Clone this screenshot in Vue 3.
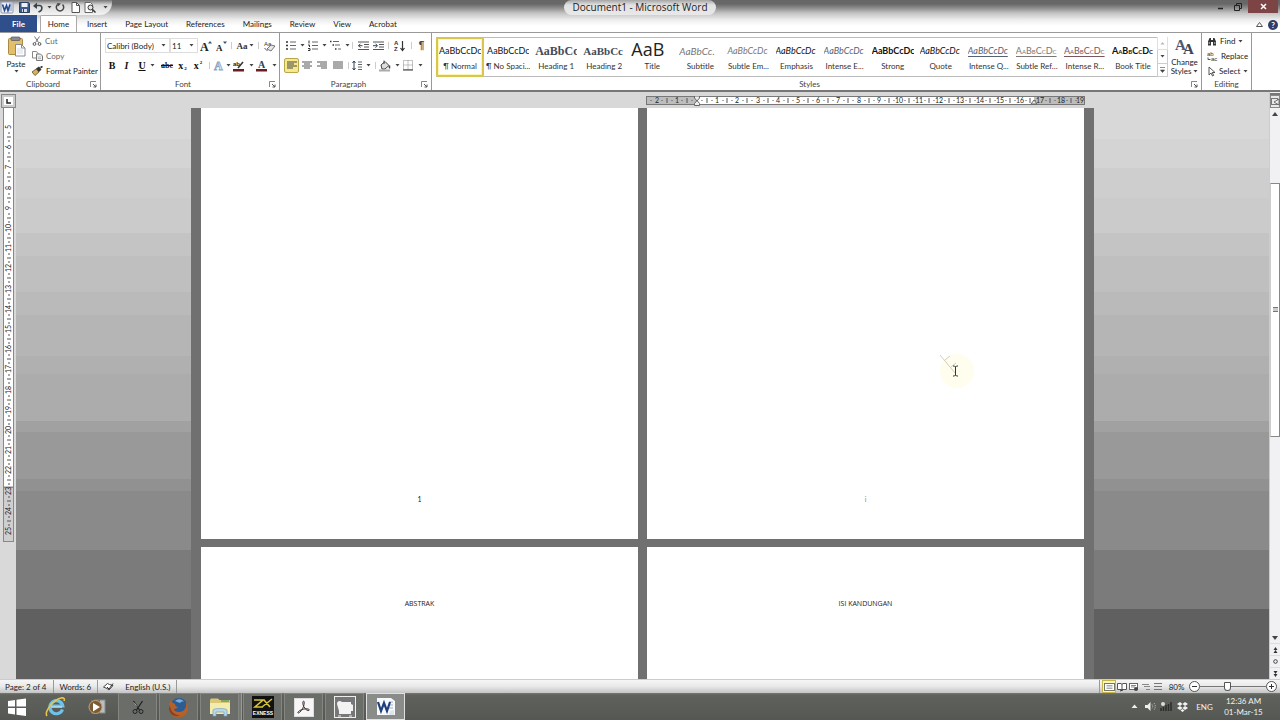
<script setup>
import { ref, h } from 'vue'

const serif = 'font-family="Liberation Serif, serif"'
const icons = {
  word: [14, 13, '<rect x="1" y="1" width="12" height="11" rx="1" fill="#e9eef8" stroke="#8a96b0"/><path d="M9 3h3M9 5h3M9 7h3M9 9h3" stroke="#8793b5"/><path d="M2.500 3.500l2 6 2-5 1.500 5 2-6" fill="none" stroke="#26488c" stroke-width="1.600"/>'],
  save: [11, 11, '<path d="M.5.5h9l1 1v9h-10z" fill="#3e5a88" stroke="#2b3f63"/><rect x="2.500" y="1" width="6" height="4" fill="#eef2f8"/><rect x="3" y="7" width="5" height="3" fill="#d5dce8"/><path d="M4.500 7v3" stroke="#2b3f63"/>'],
  undo: [11, 11, '<path d="M2 3.500h4.500c3 0 3 4 1 5.500l-2 1" fill="none" stroke="#39424f" stroke-width="1.600"/><path d="M0 4l4-3.500v6.500z" fill="#39424f"/>'],
  redo: [10, 11, '<path d="M7.500 2.500a3.700 3.700 0 1 1-5 0" fill="none" stroke="#444" stroke-width="1.500"/><path d="M2 1l4 .5-3 3z" fill="#444"/>'],
  doc: [9, 11, '<path d="M1 .5h4.500l3 3v7h-7.500z" fill="#fff" stroke="#555"/><path d="M5.500.5v3h3" fill="none" stroke="#555"/>'],
  preview: [12, 11, '<path d="M1 .5h5.500l2 2v8h-7.500z" fill="#fff" stroke="#666"/><circle cx="6.500" cy="5.500" r="2.500" fill="#dfe6ee" stroke="#333"/><path d="M8.500 7.500l3 3" stroke="#333" stroke-width="1.500"/>'],
  paste: [19, 21, '<rect x="1.500" y="2.500" width="14" height="16" rx="1" fill="#e3bf68" stroke="#a98948"/><rect x="4" y="1" width="9" height="3.500" rx="1" fill="#8b8b93" stroke="#55555e" stroke-width=".7"/><path d="M8.500 8.500h6l3.500 3.500v8h-9.500z" fill="#fff" stroke="#889"/><path d="M14.500 8.500v3.500h3.500" fill="none" stroke="#889"/><path d="M10 13h6M10 15h6M10 17h6" stroke="#c3cad6" stroke-width=".7"/>'],
  cut: [10, 10, '<path d="M2.500.5l4 6M7.500.5l-4 6" stroke="#777" fill="none"/><circle cx="2.500" cy="8" r="1.400" fill="none" stroke="#555"/><circle cx="7.500" cy="8" r="1.400" fill="none" stroke="#555"/>'],
  copy: [11, 10, '<path d="M.5.5h4l1.500 2v4.500h-5.500z" fill="#fff" stroke="#888"/><path d="M4.500 3h4l2 2v4.500h-6z" fill="#eee" stroke="#777"/><path d="M6 6h3M6 7.500h3" stroke="#999" stroke-width=".6"/>'],
  painter: [11, 10, '<path d="M0 6l4-3 3 3-4 3.500z" fill="#d9b25a" stroke="#5e4c28" stroke-width=".8"/><path d="M4 2.500l3-2 2.500 3-2.500 2.500z" fill="#333"/><path d="M8.500 1.500l2-1" stroke="#222" stroke-width="1.500"/>'],
  grow: [13, 14, `<text x="0" y="12" ${serif} font-size="12" font-weight="bold" fill="#222">A</text><path d="M8 4.500l2-2.500 2 2.500z" fill="#3a5075"/>`],
  shrink: [11, 12, `<text x="0" y="11" ${serif} font-size="9" font-weight="bold" fill="#222">A</text><path d="M7 1.500h4l-2 2.500z" fill="#3a5075"/>`],
  clear: [12, 12, '<text x="0" y="6" font-size="6" font-family="Liberation Sans" fill="#333">Aa</text><path d="M3 9l4-4 4 1-4 5z" fill="#e7e7ee" stroke="#555" stroke-width=".8"/><path d="M.5 8l3 3" stroke="#555"/>'],
  outlineA: [12, 14, `<text x="1" y="11" ${serif} font-size="12" font-weight="bold" fill="#fff" stroke="#8ca6c8" stroke-width=".9">A</text>`],
  marker: [12, 12, '<text x="0" y="6" font-size="6" font-weight="bold" font-family="Liberation Sans" fill="#222">ab</text><path d="M5 8l5-6" stroke="#333" stroke-width="1.500"/><rect x="0" y="9" width="11" height="2.500" fill="#6b1d26"/>'],
  colorA: [12, 12, `<text x="2" y="8" ${serif} font-size="10" font-weight="bold" fill="#2b3f63">A</text><rect x="0" y="9" width="11" height="2.500" fill="#6b1d26"/>`],
  bullets: [10, 11, '<path d="M0 2h2M0 5.500h2M0 9h2" stroke="#333" stroke-width="1.600"/><path d="M4 2h6M4 5.500h6M4 9h6" stroke="#666"/>'],
  numbers: [10, 11, '<path d="M1 .5v3M0 5h1.500v2M0 8.500h2v2h-2" stroke="#333" fill="none"/><path d="M4 2h6M4 5.500h6M4 9h6" stroke="#666"/>'],
  multi: [11, 11, '<path d="M0 1.500h1.500M2.500 5h1.500M5 9h1.500" stroke="#333" stroke-width="1.500"/><path d="M3 1.500h6M5 5h5M8 9h3" stroke="#666"/>'],
  outdent: [11, 10, '<path d="M0 1h11M6 3.500h5M6 6h5M0 8.500h11" stroke="#555"/><path d="M4.500 4.700h-4M2.500 2.700l-2 2 2 2" fill="none" stroke="#345"/>'],
  indent: [11, 10, '<path d="M0 1h11M6 3.500h5M6 6h5M0 8.500h11" stroke="#555"/><path d="M0 4.700h4M2.500 2.700l2 2-2 2" fill="none" stroke="#345"/>'],
  sort: [11, 12, '<text x="0" y="5" font-size="6" font-weight="bold" font-family="Liberation Sans" fill="#333">A</text><text x="0" y="11" font-size="6" font-weight="bold" font-family="Liberation Sans" fill="#333">Z</text><path d="M8.500 1v9M6.500 8l2 2.500 2-2.500" stroke="#333" fill="none" stroke-width="1.200"/>'],
  left: [10, 9, '<path d="M0 1h10M0 3h7M0 5h10M0 7h6" stroke="#444"/>'],
  center: [10, 9, '<path d="M0 1h10M2 3h6M0 5h10M2 7h6" stroke="#555"/>'],
  right: [10, 9, '<path d="M0 1h10M3 3h7M0 5h10M4 7h6" stroke="#555"/>'],
  justify: [10, 9, '<path d="M0 1h10M0 3h10M0 5h10M0 7h10" stroke="#555"/>'],
  spacing: [10, 11, '<path d="M2 1v9M.5 3l1.500-2 1.500 2M.5 8l1.500 2 1.500-2" stroke="#345" fill="none"/><path d="M6 2h4M6 4.500h4M6 7h4M6 9.500h4" stroke="#666"/>'],
  bucket: [12, 12, '<path d="M2 5l4-3.500 4 4-4 3.500-3 0z" fill="#ddd" stroke="#444"/><path d="M5 4v-3.500" stroke="#444"/><path d="M10.500 5.500v3" stroke="#444" stroke-width="1.500"/><path d="M0 10.500h11" stroke="#aaa" stroke-width="2"/>'],
  borders: [11, 11, '<path d="M.5 .5h9v9h-9zM5 .5v9M.5 5h9" stroke="#888" stroke-dasharray="1 1" fill="none"/><path d="M0 10h10" stroke="#333"/>'],
  change: [20, 20, '<text x="0" y="13" font-size="15" font-weight="bold" font-family="Liberation Serif" fill="#4c5a72">A</text><text x="8" y="17" font-size="15" font-weight="bold" font-family="Liberation Serif" fill="#3c4658">A</text>'],
  find: [10, 9, '<path d="M1 8.500v-4l1.500-3.500h1.500v7.500zM9 8.500v-4l-1.500-3.500h-1.500v7.500z" fill="#333"/><path d="M4 4h2" stroke="#333" stroke-width="2"/><path d="M2.200 5v2M7.800 5v2" stroke="#bbb"/>'],
  replace: [11, 10, '<text x="0" y="5" font-size="6" font-family="Liberation Sans" fill="#333">ab</text><text x="4" y="10" font-size="6" font-family="Liberation Sans" fill="#333">ac</text><path d="M1 6.500v2h2.500" fill="none" stroke="#555"/>'],
  select: [9, 11, '<path d="M2 1v8l2-2 1.500 3 1.200-.6-1.500-2.900h2.800z" fill="#fff" stroke="#444" stroke-width=".9"/>'],
  proof: [11, 10, '<path d="M.5 5l4-3.500 2 1 3.500 1-4 4.500-2-1.500z" fill="#fff" stroke="#444"/><path d="M4 5l2 2 4-5.500" fill="none" stroke="#333"/>'],
  v1: [11, 10, '<rect x=".5" y="1.500" width="10" height="7" fill="#fff" stroke="#776"/><path d="M2.500 3.500h6M2.500 5h6M2.500 6.500h6" stroke="#888" stroke-width=".7"/>'],
  v2: [10, 10, '<path d="M.5 1.500h3.500l1 .8 1-.8h3.500v6h-9zM5 2v6" fill="#fff" stroke="#555"/><path d="M3 9l3-1" stroke="#333"/>'],
  v3: [10, 10, '<rect x=".5" y="1.500" width="8" height="6" fill="#fff" stroke="#666"/><path d="M2 3.500h5M2 5h4" stroke="#888"/><circle cx="7" cy="7" r="2" fill="#444"/>'],
  v4: [9, 10, '<path d="M0 2.500h7M2 4.500h6M4 7.500h4" stroke="#888"/>'],
  v5: [8, 10, '<path d="M0 1.500h8M0 4.500h8M0 7.500h8" stroke="#777"/>'],
  start: [20, 20, '<path d="M1 4l7-1v6.500h-7zM9.500 2.800l9.500-1.300v8h-9.500zM1 11h7v6.500l-7-1zM9.500 11h9.500v8l-9.500-1.300z" fill="#fff"/>'],
  ie: [22, 22, '<path d="M17.500 13.500a6.500 6.500 0 1 1 .3-3.500h-11" fill="none" stroke="#6fc3ea" stroke-width="3.200"/><path d="M2 20c-3-4 6-16 14-18 3-.5 4 1 3 3" fill="none" stroke="#e6c649" stroke-width="1.600"/><path d="M6 11h11" stroke="#bfe6f7" stroke-width="1.200"/>'],
  wmp: [18, 18, '<rect x="7" y="2" width="10" height="13" fill="#b9bec4" stroke="#888"/><rect x="3" y="2" width="9" height="14" fill="#6a6e73"/><circle cx="7.500" cy="9" r="6.500" fill="#7a5b34" stroke="#c4a26b"/><path d="M5 5l7 4-7 4.500z" fill="#fff"/>'],
  snip: [12, 15, '<path d="M1.500 1l6 9M10.500 1l-6 9" stroke="#222" stroke-width="1.300"/><circle cx="3" cy="11.500" r="2" fill="none" stroke="#222"/><circle cx="9" cy="11.500" r="2" fill="none" stroke="#222"/><path d="M2 2.500l3 4" stroke="#ccc" stroke-width=".7"/>'],
  firefox: [21, 21, '<circle cx="11" cy="9.500" r="8.500" fill="#2c5c92"/><path d="M7 4c3-3 8-2 9 1-2-1-3 0-4 1z" fill="#79aede"/><path d="M2 3c0 3-1 4-1 8a9.500 9.500 0 0 0 19 0c0-3-1-5-2-6 1 6-2 10-7 10-3 0-5-1-5-3 2 0 3-1 4-2-2 0-3-2-3-3-2-1-4-2-5-4z" fill="#b5622a"/><path d="M2 8c0 7 6 11 11 10-5 3-12 0-12-7z" fill="#8d3e1c"/>'],
  explorer: [22, 20, '<path d="M1 3l1-1.500h7l1.500 1.500h10.500v14h-20z" fill="#d9c878"/><path d="M1 6h20v11h-20z" fill="#f2ecad"/><path d="M12 4h8" stroke="#7fa869" stroke-width="2"/><path d="M4 19v-6c0-2 14-2 14 0v6h-3v-4h-8v4z" fill="#b8d7ea" stroke="#7da3bb" stroke-width=".7"/>'],
  exness: [22, 22, '<rect width="22" height="22" fill="#111"/><path d="M2 4h9l-8 7h8M10 11l10-8M12 4l6 7" fill="none" stroke="#d8c33d" stroke-width="1.600"/><text x="11" y="19" font-size="5" text-anchor="middle" font-weight="bold" font-family="Liberation Sans" fill="#fff">EXNESS</text>'],
  acrobat: [20, 19, '<rect x=".5" y=".5" width="19" height="18" fill="#f7f5f5" stroke="#ddd"/><path d="M9 3.500c1.500-1.500 1.500 2 .5 5-1 3-3.500 6-5 6.500-1 .3-1-1 1-2.300 3-1.800 6-2.200 8.500-1.700 2 .5 1.500 1.800 0 1.500-2-.3-4.500-3.500-5-6-.3-1.500-.3-2.700 0-3z" fill="none" stroke="#3a3030" stroke-width="1"/>'],
  camtasia: [22, 22, '<rect x=".5" y=".5" width="21" height="21" fill="#77777a" stroke="#eee"/><path d="M3 8c0-3 3-4 5-2h9v2l2 1v6h-2v3h-12v-3z" fill="#f2f2f2"/><path d="M4 20h3M15 20h3" stroke="#eee"/>'],
  wordbig: [20, 20, '<path d="M1 1h14l4 3v14h-18z" fill="#f8f9fb"/><path d="M13 5h4M13 8h4M13 11h4" stroke="#9fb0c8"/><path d="M2 5l3 9 3-8 3 8 3-9" fill="none" stroke="#1d3f7c" stroke-width="2.200"/><path d="M14 14l4-1v5h-5z" fill="#dfe5ee"/>'],
  up: [7, 5, '<path d="M3.500 0.500l3 3.500h-6z" fill="#eee"/>'],
  sound: [11, 11, '<path d="M0 4h2.500l3-3v9l-3-3h-2.500z" fill="#eee"/><path d="M7 3.500q1.500 2 0 4M9 2q2.500 3.500 0 7" fill="none" stroke="#ccc" stroke-dasharray="1 1"/>'],
  net: [12, 11, '<path d="M1 10v-3M3.500 10v-4M6 10v-6M8.500 10v-7M11 10v-9" stroke="#2c2d2b" stroke-width="1.500"/><circle cx="3" cy="3" r="2" fill="#ddd"/>'],
  dropbox: [11, 10, '<path d="M3 0l2.500 2-2.500 2-3-2zM8 0l3 2-3 2-2.500-2zM3 4l2.500 2-2.500 2-3-2zM8 4l3 2-3 2-2.500-2zM5.500 7l2 1.500-2 1.500-2-1.500z" fill="#f2f2f2"/>'],
  launcher: [7, 7, '<path d="M.5 6v-5.500h5.500" fill="none" stroke="#888"/><path d="M3 3l3 3M6 3.500v2.500h-2.500" fill="none" stroke="#555"/>'],
  browse: [9, 9, '<rect x=".5" y="1.500" width="6" height="6" fill="none" stroke="#777"/><path d="M3 5l5-3v6z" fill="#eee" stroke="#555" stroke-width=".8"/>']
}

const Icon = (p) => {
  const [w, ht, body] = icons[p.name]
  return h('svg', { width: w, height: ht, viewBox: `0 0 ${w} ${ht}`, innerHTML: body, 'aria-hidden': 'true' })
}
Icon.props = ['name']
const Caret = () => h('svg', { width: 5, height: 3, viewBox: '0 0 5 3', 'aria-hidden': 'true' }, [h('path', { d: 'M.5 0h4l-2 2.500z', fill: '#444' })])

const tabs = ['Insert', 'Page Layout', 'References', 'Mailings', 'Review', 'View', 'Acrobat']
const paraRow1 = [['bullets', 1], ['numbers', 1], ['multi', 1], null, ['outdent'], ['indent'], null, ['sort'], null]
const paraRow2 = [['left'], ['center'], ['right'], ['justify'], null, ['spacing', 1], null, ['bucket', 1], ['borders', 1]]
const styles = [
  ['AaBbCcDc', '¶ Normal', 'plain'],
  ['AaBbCcDc', '¶ No Spaci...', 'plain'],
  ['AaBbCc', 'Heading 1', 'head h1'],
  ['AaBbCc', 'Heading 2', 'head h2'],
  ['AaB', 'Title', 'title'],
  ['AaBbCc.', 'Subtitle', 'ital soft wide'],
  ['AaBbCcDc', 'Subtle Em...', 'ital soft'],
  ['AaBbCcDc', 'Emphasis', 'ital'],
  ['AaBbCcDc', 'Intense E...', 'ital blue'],
  ['AaBbCcDc', 'Strong', 'bold'],
  ['AaBbCcDc', 'Quote', 'ital'],
  ['AaBbCcDc', 'Intense Q...', 'ital blue under'],
  ['AaBbCcDc', 'Subtle Ref...', 'caps soft under'],
  ['AaBbCcDc', 'Intense R...', 'caps red under'],
  ['AaBbCcDc', 'Book Title', 'caps bold']
]
const activeStyle = ref(0)

const hNums = Array.from({ length: 19 }, (_, i) => i + 1)
const hx = (n) => Math.round(51 + n * 20.2)
const vNums = Array.from({ length: 21 }, (_, i) => i + 5)
const vy = (n) => Math.round(19 + (n - 5) * 20.2)

const apps = ['snip', 'firefox', 'explorer', 'exness', 'acrobat', 'camtasia', 'wordbig']
const appNames = ['Snipping Tool', 'Firefox', 'File Explorer', 'Exness', 'Acrobat Reader', 'Recorder', 'Word']
const zoom = ref(41)
</script>

<template>
  <div class="window">
    <header class="top">
      <div class="titlebar">
        <div class="qat">
          <button aria-label="Word"><Icon name="word" /></button>
          <button aria-label="Save"><Icon name="save" /></button>
          <button aria-label="Undo"><Icon name="undo" /><Caret /></button>
          <button aria-label="Redo"><Icon name="redo" /></button>
          <button aria-label="New"><Icon name="doc" /></button>
          <button aria-label="Print preview"><Icon name="preview" /></button>
          <button aria-label="Customize"><Caret /></button>
        </div>
        <h1>Document1 - Microsoft Word</h1>
        <div class="winbtns">
          <button aria-label="Minimize"><svg width="7" height="7"><path d="M1 5.500h5" stroke="#222" stroke-width="1.500" /></svg></button>
          <button aria-label="Restore"><svg width="8" height="8"><path d="M.5 2.500h5v5h-5zM2.500 2v-1.500h5v5h-2" fill="none" stroke="#222" /></svg></button>
          <button class="close" aria-label="Close"><svg width="7" height="7"><path d="M1 1l5 5M6 1l-5 5" stroke="#fff" stroke-width="1.500" /></svg></button>
        </div>
      </div>
      <nav class="tabs">
        <button class="file">File</button>
        <button class="home">Home</button>
        <button v-for="t in tabs" :key="t">{{ t }}</button>
        <span class="grow"></span>
        <button class="mini" aria-label="Minimize ribbon"><svg width="7" height="6"><path d="M.5 5.500l3-4 3 4z" fill="#fff" stroke="#555" /></svg></button>
        <button class="help" aria-label="Help">?</button>
      </nav>
    </header>

    <section class="ribbon">
      <div class="group clipboard">
        <div class="body">
          <button class="big"><Icon name="paste" /><span>Paste</span><Caret /></button>
          <div class="list">
            <button class="dim"><Icon name="cut" />Cut</button>
            <button class="dim"><Icon name="copy" />Copy</button>
            <button><Icon name="painter" />Format Painter</button>
          </div>
        </div>
        <footer><span>Clipboard</span><button aria-label="Clipboard options"><Icon name="launcher" /></button></footer>
      </div>

      <div class="group font">
        <div class="body rows">
          <div class="row f1">
            <label class="combo"><select aria-label="Font"><option>Calibri (Body)</option></select><Caret /></label>
            <label class="combo"><select aria-label="Font size"><option>11</option></select><Caret /></label>
            <button aria-label="Grow font"><Icon name="grow" /></button>
            <button aria-label="Shrink font"><Icon name="shrink" /></button>
            <i class="sep"></i>
            <button class="aa">Aa<Caret /></button>
            <i class="sep"></i>
            <button aria-label="Clear formatting"><Icon name="clear" /></button>
          </div>
          <div class="row f2">
            <button class="glyph b">B</button>
            <button class="glyph i">I</button>
            <button class="glyph u spread"><u>U</u><Caret /></button>
            <button class="glyph s"><s>abc</s></button>
            <button class="glyph x">x<sub>2</sub></button>
            <button class="glyph x">x<sup>2</sup></button>
            <i class="sep"></i>
            <button aria-label="Text effects"><Icon name="outlineA" /><Caret /></button>
            <button class="spread" aria-label="Highlight"><Icon name="marker" /><Caret /></button>
            <button class="spread" aria-label="Font color"><Icon name="colorA" /><Caret /></button>
          </div>
        </div>
        <footer><span>Font</span><button aria-label="Font options"><Icon name="launcher" /></button></footer>
      </div>

      <div class="group para">
        <div class="body rows">
          <div class="row p1">
            <template v-for="(b, k) in paraRow1" :key="k">
              <i v-if="!b" class="sep"></i>
              <button v-else :class="{ spread: b[1] }" :aria-label="b[0]"><Icon :name="b[0]" /><Caret v-if="b[1]" /></button>
            </template>
            <button class="pilcrow">¶</button>
          </div>
          <div class="row p2">
            <template v-for="(b, k) in paraRow2" :key="k">
              <i v-if="!b" class="sep"></i>
              <button v-else :class="{ spread: b[1], on: b[0] === 'left' }" :aria-label="b[0]"><Icon :name="b[0]" /><Caret v-if="b[1]" /></button>
            </template>
          </div>
        </div>
        <footer><span>Paragraph</span><button aria-label="Paragraph options"><Icon name="launcher" /></button></footer>
      </div>

      <div class="group stylesgrp">
        <div class="body">
          <div class="gallery">
            <button v-for="(s, k) in styles" :key="k" :class="['tile', { sel: k === activeStyle }]" @click="activeStyle = k">
              <span :class="['sample', s[2]]">{{ s[0] }}</span>
              <span class="name">{{ s[1] }}</span>
            </button>
          </div>
          <div class="spin">
            <button class="off" aria-label="Previous styles"><svg width="5" height="3"><path d="M2.500 0l2 2.500h-4z" fill="#888" /></svg></button>
            <button aria-label="Next styles"><Caret /></button>
            <button aria-label="More styles"><svg width="5" height="6"><path d="M0 .5h5M.5 3h4l-2 2.500z" fill="#444" stroke="#444" stroke-width=".6" /></svg></button>
          </div>
          <button class="big change"><Icon name="change" /><span>Change</span><span class="line">Styles <Caret /></span></button>
        </div>
        <footer><span>Styles</span><button aria-label="Styles options"><Icon name="launcher" /></button></footer>
      </div>

      <div class="group editing">
        <div class="body">
          <div class="list">
            <button><Icon name="find" />Find<Caret /></button>
            <button><Icon name="replace" />Replace</button>
            <button><Icon name="select" />Select<Caret /></button>
          </div>
        </div>
        <footer><span>Editing</span></footer>
      </div>
      <div class="rest"></div>
    </section>

    <main class="work">
      <aside class="left">
        <button class="corner" aria-label="Tab stop"><svg width="5" height="5"><path d="M1 0v4h4" fill="none" stroke="#222" stroke-width="1.500" /></svg></button>
        <svg class="vruler" width="11" height="434">
          <rect x=".5" y="-1" width="10" height="380" fill="#fff" stroke="#888" />
          <rect x=".5" y="379.500" width="10" height="54" fill="#cfcfcf" stroke="#888" />
          <g v-for="n in vNums" :key="n">
            <text class="rnum" :transform="`translate(8 ${vy(n)}) rotate(-90)`">{{ n }}</text>
            <path v-if="n < 25" :d="`M4 ${vy(n) + 10}h4M5 ${vy(n) + 6}h2M5 ${vy(n) + 14}h2`" stroke="#555" />
          </g>
        </svg>
      </aside>
      <div class="canvas">
        <div class="sheets">
          <svg class="hruler" width="439" height="10">
            <rect x=".5" y=".5" width="438" height="8" fill="#bdbdbd" stroke="#777" />
            <rect x="51" y="1" width="337" height="7" fill="#fff" />
            <text class="rnum" x="11" y="7">2</text>
            <text class="rnum" x="31" y="7">1</text>
            <path d="M21 2v5M41 2v5M16 4v1M26 4v1M36 4v1M46 4v1M5 4v1M61 2v5M56 4v1M66 4v1" stroke="#555" />
            <g v-for="n in hNums" :key="n">
              <text class="rnum" :x="hx(n) - (n === 19 ? 1 : 0)" y="7">{{ n }}</text>
              <path v-if="n < 19" :d="`M${hx(n) + 10} 2v5M${hx(n) + 6} 4v1M${hx(n) + 15} 4v1`" stroke="#555" />
            </g>
            <path d="M48.500 0h5v2l-2.500 3-2.500-3zM48.500 9.500v-2l2.500-3 2.500 3v2zM385 8l3-4 3 4z" fill="#eee" stroke="#666" />
          </svg>
          <div class="desk">
            <article class="page"><p class="num">1</p></article>
            <article class="page">
              <p class="num faint">i</p>
              <div class="spot">
                <svg width="34" height="34">
                  <circle cx="17" cy="17" r="17" fill="#fffeee" />
                  <path d="M0 1l15 18M5 6l5-4M11 13l5-4" stroke="#c4c2ad" fill="none" stroke-width=".8" />
                  <path d="M13 12h1.500l1 1 1-1h1.500M15.500 13v8M13 22h1.500l1-1 1 1h1.500" fill="none" stroke="#333" />
                </svg>
              </div>
            </article>
            <article class="page"><h2>ABSTRAK</h2></article>
            <article class="page"><h2>ISI KANDUNGAN</h2></article>
          </div>
        </div>
      </div>
      <aside class="scroll">
        <span class="split"></span>
        <button class="toggle" aria-label="View ruler"><Icon name="browse" /></button>
        <button aria-label="Scroll up"><svg width="6" height="4"><path d="M3 0l3 4h-6z" fill="#444" /></svg></button>
        <div class="track"><div class="thumb"><i></i></div></div>
        <button aria-label="Scroll down"><svg width="6" height="4"><path d="M0 0h6l-3 4z" fill="#444" /></svg></button>
        <button class="nav" aria-label="Previous page"><svg width="5" height="6"><path d="M2.500 0l2 3h-4zM2.500 3l2 3h-4z" fill="#333" /></svg></button>
        <button class="nav" aria-label="Browse object"><svg width="5" height="5"><circle cx="2.500" cy="2.500" r="1.800" fill="none" stroke="#444" /></svg></button>
        <button class="nav" aria-label="Next page"><svg width="5" height="6"><path d="M.5 0h4l-2 3zM.5 3h4l-2 3z" fill="#333" /></svg></button>
      </aside>
    </main>

    <div class="status">
      <button>Page: 2 of 4</button>
      <button>Words: 6</button>
      <button class="proof" aria-label="Proofing"><Icon name="proof" /></button>
      <button class="lang">English (U.S.)</button>
      <span class="grow"></span>
      <div class="views">
        <button v-for="n in 5" :key="n" :class="{ on: n === 1 }" :aria-label="'View ' + n"><Icon :name="'v' + n" /></button>
      </div>
      <button class="pct">80%</button>
      <button class="round" aria-label="Zoom out"><svg width="11" height="11"><circle cx="5.500" cy="5.500" r="5" fill="#fff" stroke="#555" /><path d="M3 5.500h5" stroke="#333" /></svg></button>
      <input v-model="zoom" type="range" min="0" max="100" aria-label="Zoom" />
      <button class="round" aria-label="Zoom in"><svg width="11" height="11"><circle cx="5.500" cy="5.500" r="5" fill="#fff" stroke="#555" /><path d="M3 5.500h5M5.500 3v5" stroke="#333" /></svg></button>
    </div>

    <div class="taskbar">
      <button class="task bare first" aria-label="Start"><Icon name="start" /></button>
      <button class="task bare" aria-label="Internet Explorer"><Icon name="ie" /></button>
      <button class="task bare" aria-label="Media Player"><Icon name="wmp" /></button>
      <button v-for="(a, k) in apps" :key="a" :class="['task', { active: a === 'wordbig', stack: a === 'explorer' }]" :aria-label="appNames[k]"><Icon :name="a" /></button>
      <span class="grow"></span>
      <div class="tray">
        <button aria-label="Hidden icons"><Icon name="up" /></button>
        <button aria-label="Volume"><Icon name="sound" /></button>
        <button aria-label="Network"><Icon name="net" /></button>
        <button aria-label="Dropbox"><Icon name="dropbox" /></button>
        <button class="eng">ENG</button>
        <time><span>12:36 AM</span><span>01-Mar-15</span></time>
      </div>
    </div>
  </div>
</template>

<style>
html, body { background: #d8d8d8; }
</style>

<style scoped>
.window { height: 100vh; display: flex; flex-direction: column; overflow: hidden; font: 8px/10px Lato, "Open Sans", sans-serif; color: #222; background: #fff; }
.window *, .window { box-sizing: border-box; }
button { border: 0; padding: 0; margin: 0; background: none; color: inherit; font: inherit; display: flex; align-items: center; justify-content: center; white-space: nowrap; }
svg { display: block; flex: none; }
.grow { flex: 1; }

.top { height: 33px; flex: none; background: linear-gradient(#666 0, #686868 4px, #8c8c8c 8px, #c2c2c2 13px, #eee 20px, #fff 26px); border-bottom: 1px solid #999; display: flex; flex-direction: column; }
.titlebar { height: 16px; display: grid; grid-template-columns: 1fr auto 1fr; align-items: start; }
.qat { display: grid; grid-template-columns: 14px 20px 17px 18px 12px 17px 14px; height: 15px; width: 112px; background: linear-gradient(#777 0, #d8d8d8 5px, #f4f4f4); border-radius: 0 0 12px 0; }
.qat button:nth-child(3) { gap: 3px; }
h1 { margin: 0; padding: 0 8px; font: 10px/15px "Open Sans", sans-serif; color: #222; border-radius: 8px; background: linear-gradient(#a5a5a5, #e2e2e2 5px, #e8e8e8); }
.winbtns { display: flex; justify-content: flex-end; padding-right: 2px; }
.winbtns button { width: 17px; height: 13px; }
.winbtns .close { width: 30px; margin-left: 2px; background: #7c4444; }
.tabs { flex: 1; display: flex; align-items: stretch; }
.tabs button { padding: 0 9px; }
.tabs .file { width: 37px; padding: 0; background: #2f4f8c; color: #fff; font-weight: 700; }
.tabs .home { width: 37px; padding: 0; margin: 0 1px 0 3px; background: #fff; border: 1px solid #aaa; border-bottom: 0; border-radius: 2px 2px 0 0; height: 17px; }
.tabs .mini { padding: 0; width: 14px; }
.tabs .help { width: 10px; height: 10px; padding: 0; margin: 2px 2px 0 2px; align-self: center; border-radius: 5px; background: #2f3f66; color: #fff; font-weight: 700; }

.ribbon { height: 59px; flex: none; display: flex; background: #fff; border-bottom: 2px solid #777; }
.group { display: flex; flex-direction: column; border-right: 1px solid #999; flex: none; }
.body { height: 45px; display: flex; padding-top: 1px; }
.group footer { flex: 1; display: flex; align-items: center; color: #444; }
.group footer span { flex: 1; text-align: center; }
.group footer button { width: 14px; }
.clipboard { width: 101px; }
.font { width: 179px; }
.para { width: 152px; }
.stylesgrp { flex: 1; }
.editing { width: 50px; }
.rest { width: 28px; flex: none; }
.big { flex-direction: column; justify-content: flex-start; width: 32px; padding-top: 2px; }
.big > span { margin: 2px 0 1px; }
.list { display: flex; flex-direction: column; justify-content: space-between; height: 44px; }
.list button { gap: 3px; height: 14px; justify-content: flex-start; }
.dim { color: #666; }
.rows { flex-direction: column; gap: 5px; padding: 5px 0 0 4px; }
.row { display: grid; height: 15px; align-items: center; flex: none; }
.row button { height: 15px; gap: 1px; }
.row .spread { gap: 4px; }
.f1 { grid-template-columns: 65px 28px 16px 15px 5px 22px 5px 17px; }
.f2 { grid-template-columns: 14px 15px 25px 16px 15px 16px 6px 19px 24px 23px; }
.p1 { grid-template-columns: 22px 23px 21px 5px 16px 15px 5px 17px 6px 15px; }
.p2 { grid-template-columns: 15px 15px 16px 16px 5px 21px 6px 23px 23px; }
.combo { display: flex; align-items: center; height: 15px; border: 1px solid #ddd; padding-right: 3px; background: #fff; }
select { appearance: none; flex: 1; min-width: 0; border: 0; padding: 0 0 0 1px; background: none; font: inherit; color: #222; }
.sep { width: 1px; height: 7px; background: #ccc; justify-self: center; }
.aa { font: bold 9px/12px "Liberation Serif", serif; color: #333; }
.glyph { font: bold 10px/12px "Liberation Serif", serif; color: #111; }
.i { font-style: italic; }
.s { font-size: 8px; }
.x sub, .x sup { font-size: 5px; line-height: 5px; }
.x sub { align-self: flex-end; margin-bottom: 2px; }
.x sup { align-self: flex-start; margin-top: 2px; }
.pilcrow { font: bold 10px/12px "Liberation Sans", sans-serif; color: #444; }
.row .on { background: #f5e98c; border: 1px solid #b9a74a; border-radius: 2px; }

.stylesgrp .body { padding: 4px 0 0 4px; align-items: flex-start; }
.gallery { flex: 1; min-width: 0; height: 40px; display: grid; grid-template-columns: repeat(15, minmax(0, 1fr)); border: 1px solid #bbb; border-width: 1px 0; }
.tile { flex-direction: column; justify-content: flex-start; padding: 2px 4px 0; overflow: hidden; margin: -1px 0; }
.tile.sel { border: 2px solid #d6c64e; box-shadow: inset 0 0 0 1px #fbf6b5; border-radius: 2px; padding: 0 2px; }
.sample { width: 42px; height: 22px; line-height: 24px; overflow: hidden; text-align: left; font-size: 9px; color: #111; }
.tile .name { line-height: 11px; color: #333; }
.ital { font-style: italic; }
.soft { color: #777; }
.blue { color: #566274; }
.red { color: #7b5560; }
.bold { font-weight: 700; }
.caps { font-variant: small-caps; }
.under { text-decoration: underline; text-underline-offset: 2px; }
.head { font: bold 11px/24px "Liberation Serif", serif; color: #444b5a; }
.h1 { font-size: 12px; }
.title { font: 18px/20px "Open Sans", sans-serif; color: #222; }
.wide { font-size: 10px; }
.spin { width: 11px; height: 40px; display: flex; flex-direction: column; }
.spin button { flex: 1; border: 1px solid #ccc; border-top-width: 0; }
.spin .off { opacity: .6; }
.change { width: 33px; padding-top: 0; }
.change > span { margin: 1px 0 0; line-height: 9px; }
.line { display: flex; align-items: center; gap: 2px; }
.change .line { margin: 0; }
.editing .list { padding-left: 5px; }

.work { flex: 1; min-height: 0; display: flex; background: linear-gradient(#d8d8d8 8%, #d4d4d4 8% 13%, #cecece 13% 18%, #cbcbcb 18% 24%, #c4c4c4 24% 28%, #bfbfbf 28% 34%, #bababa 34% 38%, #b5b5b5 38% 45%, #b0b0b0 45% 48%, #acacac 48% 56%, #a1a1a1 56% 58%, #999 58% 66%, #919191 66% 68%, #8a8a8a 68% 78%, #7b7b7b 78% 88%, #606060 88%); }
.left { width: 16px; flex: none; background: #d9d9d9; display: flex; flex-direction: column; align-items: center; padding-top: 2px; }
.corner { width: 15px; height: 14px; border: 1px solid #888; background: #fff; box-shadow: inset 0 0 0 2px #ccc; flex: none; }
.rnum { font: 7px Lato, sans-serif; fill: #222; text-anchor: middle; }
.canvas { flex: 1; min-width: 0; display: flex; justify-content: center; }
.sheets { width: 100%; max-width: 903px; display: flex; flex-direction: column; }
.hruler { margin: 4px 9px 2px; align-self: flex-end; }
.desk { flex: 1; min-height: 0; background: #707070; display: grid; grid-template-columns: 1fr 1fr; grid-template-rows: 431fr 132fr; gap: 8px 9px; padding: 0 10px; }
.page { background: #fff; position: relative; display: flex; flex-direction: column; align-items: center; font-family: Lato, sans-serif; font-size: 7px; color: #222; }
.num { margin: auto 0 35px; line-height: 10px; }
.faint { color: #888; }
h2 { margin: 52px 0 0; font: 7px/10px "Open Sans", sans-serif; color: #222; }
.spot { position: absolute; left: 67%; top: 57%; }
.scroll { width: 11px; flex: none; background: #f1f1f4; display: flex; flex-direction: column; border-left: 1px solid #ccc; }
.split { height: 2px; background: #777; margin-top: 1px; }
.scroll button { flex: none; height: 11px; }
.scroll .toggle { height: 13px; border: 1px solid #888; background: #e8e8e8; }
.track { flex: 1; display: grid; grid-template-rows: 64fr 255fr 196fr; }
.thumb { grid-row: 2; background: #fff; border: 1px solid #888; border-left-color: #ccc; display: grid; place-items: center; }
.thumb i { width: 5px; height: 5px; border: 1px solid #777; border-width: 1px 0; background: #ccc; }
.scroll .nav { border-top: 1px solid #ddd; height: 12px; }

.status { height: 14px; flex: none; display: flex; align-items: stretch; background: linear-gradient(#f6f6f6, #e8e8e8 50%, #c4c4c4); border-top: 1px solid #ccc; color: #222; }
.status > button { border-right: 1px solid #999; padding: 0 6px; }
.status > button:first-child { padding-left: 5px; }
.status .proof { border: 0; padding: 0 5px; }
.views { display: flex; border-left: 1px solid #999; padding-left: 2px; }
.views button { width: 12px; }
.views .on { width: 14px; border: 1px solid #c9b64a; background: #fdf6bf; }
.status .pct { border: 0; padding: 0; width: 25px; }
.status .round { border: 0; padding: 0; }
input[type=range] { appearance: none; width: 66px; margin: 0; background: linear-gradient(#777, #777) center / 100% 1px no-repeat; }
input[type=range]::-webkit-slider-thumb { appearance: none; width: 7px; height: 9px; background: #fff; border: 1px solid #555; border-radius: 1px 1px 4px 4px; }
.status .round:last-child { margin-right: 3px; }

.taskbar { height: 27px; flex: none; display: flex; gap: 2px; background: linear-gradient(#777974 0, #5f615c 2px, #5a5c57 60%, #555752); color: #f2f2f2; }
.task { width: 39px; border: 1px solid #848681; background: #6b6d69; border-bottom: 0; }
.task.bare { border: 0; background: none; }
.task.first { width: 34px; }
.task.stack { box-shadow: 2px 0 0 #777974, 3px 0 0 #999; margin-right: 2px; }
.task.active { background: #8a8c89; border: 1px solid #e0e0e0; }
.tray { display: flex; align-items: center; }
.tray button { width: 16px; }
.tray .eng { width: 29px; }
time { width: 49px; display: flex; flex-direction: column; align-items: center; line-height: 11px; margin-right: 12px; }
</style>
